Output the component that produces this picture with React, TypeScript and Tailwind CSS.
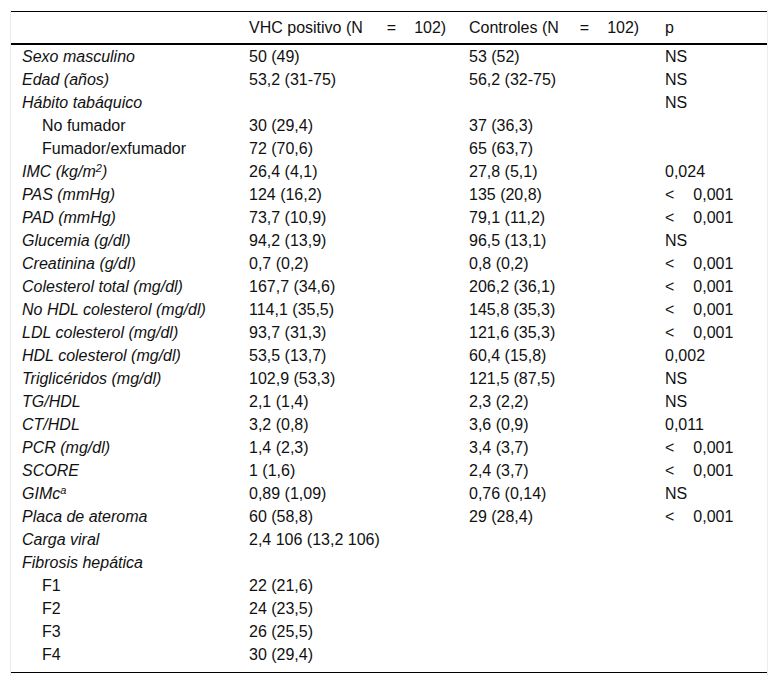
import React from "react";

type Row = { label: React.ReactNode; vhc?: string; ctrl?: string; p?: string; sub?: boolean };

const rows: Row[] = [
  { label: "Sexo masculino", vhc: "50 (49)", ctrl: "53 (52)", p: "NS" },
  { label: "Edad (años)", vhc: "53,2 (31-75)", ctrl: "56,2 (32-75)", p: "NS" },
  { label: "Hábito tabáquico", p: "NS" },
  { label: "No fumador", vhc: "30 (29,4)", ctrl: "37 (36,3)", sub: true },
  { label: "Fumador/exfumador", vhc: "72 (70,6)", ctrl: "65 (63,7)", sub: true },
  {
    label: (
      <>
        IMC (kg/m<sup className="text-[11px] leading-none">2</sup>)
      </>
    ),
    vhc: "26,4 (4,1)",
    ctrl: "27,8 (5,1)",
    p: "0,024",
  },
  { label: "PAS (mmHg)", vhc: "124 (16,2)", ctrl: "135 (20,8)", p: "<0,001" },
  { label: "PAD (mmHg)", vhc: "73,7 (10,9)", ctrl: "79,1 (11,2)", p: "<0,001" },
  { label: "Glucemia (g/dl)", vhc: "94,2 (13,9)", ctrl: "96,5 (13,1)", p: "NS" },
  { label: "Creatinina (g/dl)", vhc: "0,7 (0,2)", ctrl: "0,8 (0,2)", p: "<0,001" },
  { label: "Colesterol total (mg/dl)", vhc: "167,7 (34,6)", ctrl: "206,2 (36,1)", p: "<0,001" },
  { label: "No HDL colesterol (mg/dl)", vhc: "114,1 (35,5)", ctrl: "145,8 (35,3)", p: "<0,001" },
  { label: "LDL colesterol (mg/dl)", vhc: "93,7 (31,3)", ctrl: "121,6 (35,3)", p: "<0,001" },
  { label: "HDL colesterol (mg/dl)", vhc: "53,5 (13,7)", ctrl: "60,4 (15,8)", p: "0,002" },
  { label: "Triglicéridos (mg/dl)", vhc: "102,9 (53,3)", ctrl: "121,5 (87,5)", p: "NS" },
  { label: "TG/HDL", vhc: "2,1 (1,4)", ctrl: "2,3 (2,2)", p: "NS" },
  { label: "CT/HDL", vhc: "3,2 (0,8)", ctrl: "3,6 (0,9)", p: "0,011" },
  { label: "PCR (mg/dl)", vhc: "1,4 (2,3)", ctrl: "3,4 (3,7)", p: "<0,001" },
  { label: "SCORE", vhc: "1 (1,6)", ctrl: "2,4 (3,7)", p: "<0,001" },
  {
    label: (
      <>
        GIMc<sup className="text-[11px] leading-none">a</sup>
      </>
    ),
    vhc: "0,89 (1,09)",
    ctrl: "0,76 (0,14)",
    p: "NS",
  },
  { label: "Placa de ateroma", vhc: "60 (58,8)", ctrl: "29 (28,4)", p: "<0,001" },
  { label: "Carga viral", vhc: "2,4 106 (13,2 106)" },
  { label: "Fibrosis hepática" },
  { label: "F1", vhc: "22 (21,6)", sub: true },
  { label: "F2", vhc: "24 (23,5)", sub: true },
  { label: "F3", vhc: "26 (25,5)", sub: true },
  { label: "F4", vhc: "30 (29,4)", sub: true },
];

const cols = "grid grid-cols-[227px_220px_196px_1fr]";

function PValue({ p }: { p?: string }) {
  if (!p) return null;
  if (p.startsWith("<")) {
    return (
      <>
        <span>&lt;</span>
        <span className="ml-[19px]">{p.slice(1)}</span>
      </>
    );
  }
  return <>{p}</>;
}

export default function App() {
  return (
    <div className="min-h-[683px] bg-white pt-[10px] pl-[10px] font-['Liberation_Sans',Arial,sans-serif] text-[16px] text-[#111]">
      <div className="w-[758px] border-x border-[#ececec] pt-px pb-[3px]">
        <div className="border-t border-black">
          <div className={`${cols} h-[33px] items-center border-b-2 border-black leading-[23px]`}>
            <div />
            <div className="pl-[11px] whitespace-nowrap">
              VHC positivo (N<span className="ml-[24px]">=</span>
              <span className="ml-[18px]">102)</span>
            </div>
            <div className="pl-[11px] whitespace-nowrap">
              Controles (N<span className="ml-[21px]">=</span>
              <span className="ml-[18px]">102)</span>
            </div>
            <div className="pl-[11px]">p</div>
          </div>
          <div className="border-b border-black pb-[6px]">
            {rows.map((r, i) => (
              <div key={i} className={`${cols} h-[23px] items-center leading-[23px] whitespace-nowrap`}>
                <div className={r.sub ? "pl-[31px]" : "pl-[11px] italic"}>{r.label}</div>
                <div className="pl-[11px]">{r.vhc}</div>
                <div className="pl-[11px]">{r.ctrl}</div>
                <div className="pl-[11px]">
                  <PValue p={r.p} />
                </div>
              </div>
            ))}
          </div>
        </div>
      </div>
    </div>
  );
}
